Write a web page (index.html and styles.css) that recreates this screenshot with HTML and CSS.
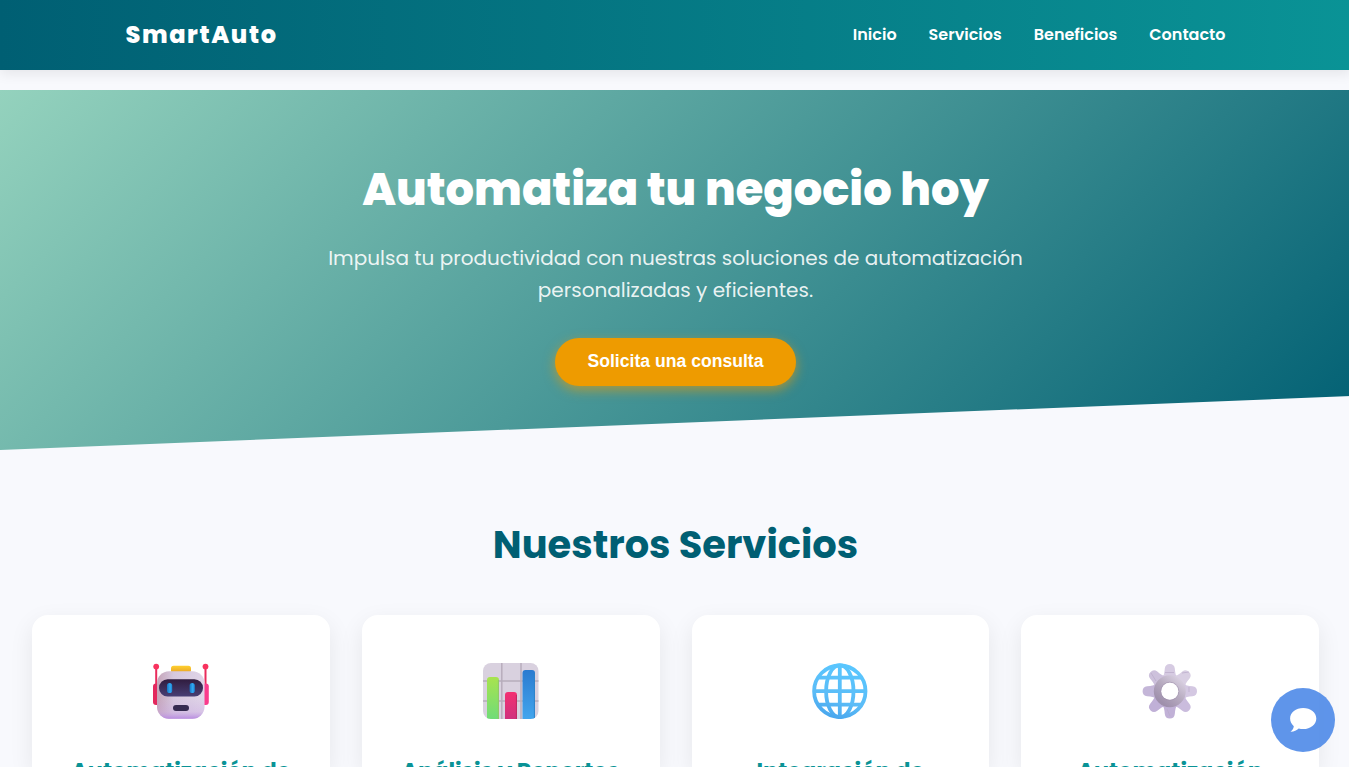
FILE: index.html
```html
<!DOCTYPE html>
<html lang="es">
<head>
<meta charset="utf-8">
<title>SmartAuto</title>
<link rel="stylesheet" href="styles.css">
</head>
<body>
<header class="header">
  <div class="header-inner">
    <div class="logo">SmartAuto</div>
    <nav class="nav">
      <a>Inicio</a><a>Servicios</a><a>Beneficios</a><a>Contacto</a>
    </nav>
  </div>
</header>
<section class="hero">
  <h1>Automatiza tu negocio hoy</h1>
  <p>Impulsa tu productividad con nuestras soluciones de automatización<br>personalizadas y eficientes.</p>
  <button class="cta">Solicita una consulta</button>
</section>
<section class="services">
  <h2>Nuestros Servicios</h2>
  <div class="grid">
    <article class="card">
      <svg class="icon" viewBox="0 0 56 56">
        <defs>
          <linearGradient id="head" x1="0" y1="0" x2="1" y2="0"><stop offset="0" stop-color="#c5a4b8"/><stop offset=".35" stop-color="#d6c8de"/><stop offset="1" stop-color="#e0d5e8"/></linearGradient>
          <linearGradient id="chin" x1="0" y1="0" x2="0" y2="1"><stop offset=".55" stop-color="#c9a8e4" stop-opacity="0"/><stop offset=".85" stop-color="#c9a8e4" stop-opacity=".35"/><stop offset="1" stop-color="#b88be0"/></linearGradient>
          <linearGradient id="visor" x1="0" y1="0" x2="0" y2="1"><stop offset="0" stop-color="#301c3e"/><stop offset="1" stop-color="#483f75"/></linearGradient>
          <linearGradient id="hat" x1="0" y1="0" x2="0" y2="1"><stop offset="0" stop-color="#ffd02e"/><stop offset="1" stop-color="#e8a228"/></linearGradient>
          <linearGradient id="eye"><stop offset="0" stop-color="#1675c2"/><stop offset=".6" stop-color="#32a9f2"/><stop offset="1" stop-color="#1b83d4"/></linearGradient>
        </defs>
        <path d="M3.200 4v22M52.500 4v22" stroke="#e92c5c" stroke-width="2"/>
        <circle cx="3.200" cy="3.600" r="2.900" fill="#f8325e"/><circle cx="52.500" cy="3.600" r="2.900" fill="#f8325e"/>
        <rect x="0" y="20.500" width="8" height="21.500" rx="3" fill="#e3285d"/><rect x="48" y="20.500" width="7.800" height="21.500" rx="3" fill="#fa3c8c"/>
        <rect x="18" y="2.800" width="20" height="7" rx="2.600" fill="url(#hat)"/>
        <rect x="4" y="8.300" width="47.500" height="47.500" rx="12" fill="url(#head)"/><rect x="4" y="8.300" width="47.500" height="47.500" rx="12" fill="url(#chin)"/>
        <rect x="6" y="16.300" width="44" height="17.300" rx="8.600" fill="url(#visor)"/>
        <rect x="14" y="20" width="5.200" height="10" rx="2.600" fill="url(#eye)"/><rect x="36.600" y="20" width="5.200" height="10" rx="2.600" fill="url(#eye)"/>
        <rect x="20" y="42" width="16" height="6" rx="3" fill="#352a50"/>
      </svg>
      <h3>Automatización de</h3>
    </article>
    <article class="card">
      <svg class="icon" viewBox="0 0 56 56">
        <defs>
          <linearGradient id="green" x1="0" y1="0" x2="0" y2="1"><stop offset="0" stop-color="#a8e34f"/><stop offset="1" stop-color="#70dc78"/></linearGradient>
          <linearGradient id="pink" x1="0" y1="0" x2="0" y2="1"><stop offset="0" stop-color="#f33072"/><stop offset="1" stop-color="#cf317d"/></linearGradient>
          <linearGradient id="blue" x1="0" y1="0" x2="0" y2="1"><stop offset="0" stop-color="#2b7bd0"/><stop offset="1" stop-color="#42a5ed"/></linearGradient>
          <clipPath id="board"><rect width="55.500" height="56" rx="8"/></clipPath>
        </defs>
        <g clip-path="url(#board)">
          <rect width="56" height="56" fill="#d9d1df"/>
          <path d="M18.800 0v56M38 0v56M0 18h56M0 38h56" stroke="#b7adbc" stroke-width="1.500"/>
          <path d="M4 56V17q0-3 3-3h6q3 0 3 3v39z" fill="url(#green)"/>
          <path d="M22 56V32q0-3 3-3h6q3 0 3 3v24z" fill="url(#pink)"/>
          <path d="M39.500 56V10q0-3 3-3h6.500q3 0 3 3v46z" fill="url(#blue)"/>
          <path d="M15.400 17v39" stroke="#91c867"/><path d="M33.400 32v24" stroke="#c02961"/><path d="M51.400 10v46" stroke="#2e83c9"/>
        </g>
      </svg>
      <h3>Análisis y Reportes</h3>
    </article>
    <article class="card">
      <svg class="icon" viewBox="0 0 56 56">
        <defs><linearGradient id="globe" gradientUnits="userSpaceOnUse" x1="38" y1="0" x2="20" y2="56"><stop offset="0" stop-color="#59c7ff"/><stop offset=".65" stop-color="#5bbcf7"/><stop offset="1" stop-color="#48a5ed"/></linearGradient></defs>
        <g fill="none" stroke="url(#globe)" stroke-width="3.800">
          <circle cx="27.800" cy="28.200" r="25.700"/>
          <ellipse cx="27.800" cy="28.200" rx="13.700" ry="26"/>
          <path d="M27.800 2v52M2 28.200h52M7 14.700h42M7 41.700h42"/>
        </g>
      </svg>
      <h3>Integración de</h3>
    </article>
    <article class="card">
      <svg class="icon" viewBox="0 0 56 56">
        <defs>
          <linearGradient id="ring" gradientUnits="userSpaceOnUse" x1="37" y1="15" x2="18" y2="38"><stop offset="0" stop-color="#d8cfe0"/><stop offset=".5" stop-color="#b7abc0"/><stop offset="1" stop-color="#9f90ac"/></linearGradient>
          <path id="tooth" d="M20.800 14Q22.300 12 22.800 5.500Q23.300 1 27.800 1T32.800 5.500Q33.300 12 34.800 14L27.800 28Z"/>
        </defs>
        <circle cx="27.800" cy="28.200" r="17" fill="#cbbddb"/>
        <g>
          <use href="#tooth" fill="#d6cbe2"/>
          <use href="#tooth" fill="#d9cfe3" transform="rotate(45 27.800 28.200)"/>
          <use href="#tooth" fill="#d4c8e2" transform="rotate(90 27.800 28.200)"/>
          <use href="#tooth" fill="#cabcdd" transform="rotate(135 27.800 28.200)"/>
          <use href="#tooth" fill="#c1b1d7" transform="rotate(180 27.800 28.200)"/>
          <use href="#tooth" fill="#c0b0d7" transform="rotate(225 27.800 28.200)"/>
          <use href="#tooth" fill="#c4b6d8" transform="rotate(270 27.800 28.200)"/>
          <use href="#tooth" fill="#cdc1dc" transform="rotate(315 27.800 28.200)"/>
        </g>
        <path d="M9 10l5 8M40 10l7-1M47 29v-5M25 46l3 7M23 9.500h9" stroke="#b9abc9" stroke-width=".7"/>
        <circle cx="27.800" cy="28.200" r="12.200" fill="none" stroke="url(#ring)" stroke-width="7.600"/>
        <circle cx="27.800" cy="28.200" r="9" fill="none" stroke="#9c8ea8" stroke-opacity=".5"/>
        <circle cx="27.800" cy="28.200" r="8.500" fill="#fff"/>
      </svg>
      <h3>Automatización</h3>
    </article>
  </div>
</section>
<div class="chat">
  <svg viewBox="0 0 28 26"><path d="M14.200 1C6.900 1 1.100 5.600 1.100 11.500c0 3.100 1.500 5.700 3.700 7.700-.2 2.100-1.300 4-3.300 5.600 3.500.1 6.200-1.500 8.200-3.300 1.400.4 2.900.6 4.500.6 7.300 0 13.100-4.600 13.100-10.600S21.500 1 14.200 1z" fill="#fff"/></svg>
</div>
</body>
</html>
```

FILE: styles.css
```css
* { box-sizing: border-box; margin: 0; padding: 0; }
html { height: 767px; overflow: hidden; }
body {
  width: 1351px;
  height: 767px;
  overflow: hidden;
  background: #f8f9fd;
  font-family: Poppins, Inter, "Open Sans", sans-serif;
}
.header {
  height: 70px;
  background: linear-gradient(90deg, #005f73, #0a9396);
  box-shadow: 0 4px 12px rgba(0, 0, 0, .08);
}
.header-inner {
  width: 1100px;
  height: 68px;
  margin: 0 auto;
  display: flex;
  justify-content: space-between;
  align-items: center;
  color: #fff;
}
.logo { font-size: 24px; font-weight: 800; letter-spacing: 1.600px; }
.nav { display: flex; gap: 32px; font-size: 16px; font-weight: 600; }
.nav a { white-space: nowrap; }
.hero {
  height: 360px;
  margin-top: 20px;
  padding-top: 65px;
  text-align: center;
  color: #fff;
  background: linear-gradient(135deg, #94d2bd, #005f73);
  clip-path: polygon(0 0, 100% 0, 100% 85%, 0 100%);
}
.hero h1 { font-size: 44.800px; line-height: 70px; font-weight: 800; white-space: nowrap; }
.hero p { margin-top: 17px; font-size: 20px; line-height: 32px; color: rgba(255, 255, 255, .9); white-space: nowrap; }
.cta {
  display: block;
  width: 241px;
  height: 48px;
  margin: 32px auto 0;
  padding-bottom: 2px;
  border: 0;
  border-radius: 24px;
  background: #ee9b00;
  color: #fff;
  font: bold 17.600px "Liberation Sans", Arial, sans-serif;
  box-shadow: 0 4px 12px rgba(238, 155, 0, .6);
}
.services { padding: 64px 32px 0; }
.services h2 {
  text-align: center;
  color: #005f73;
  font-size: 38.400px;
  line-height: 62px;
  font-weight: 700;
}
.grid { display: grid; grid-template-columns: repeat(4, 1fr); gap: 32px; margin-top: 39px; }
.card {
  height: 152px;
  padding-top: 48px;
  text-align: center;
  background: #fff;
  border-radius: 16px 16px 0 0;
  box-shadow: 0 8px 24px rgba(0, 0, 0, .08);
}
.icon { display: block; width: 56px; height: 56px; margin: 0 auto; }
.card h3 { margin-top: 34px; font-size: 22.400px; line-height: 36px; font-weight: 700; color: #0a9396; white-space: nowrap; }
.chat {
  position: fixed;
  left: 1271px;
  top: 688px;
  width: 64px;
  height: 64px;
  display: flex;
  align-items: center;
  justify-content: center;
  border-radius: 50%;
  background: rgba(78, 137, 232, .9);
}
.chat svg { width: 28px; height: 26px; }
```
